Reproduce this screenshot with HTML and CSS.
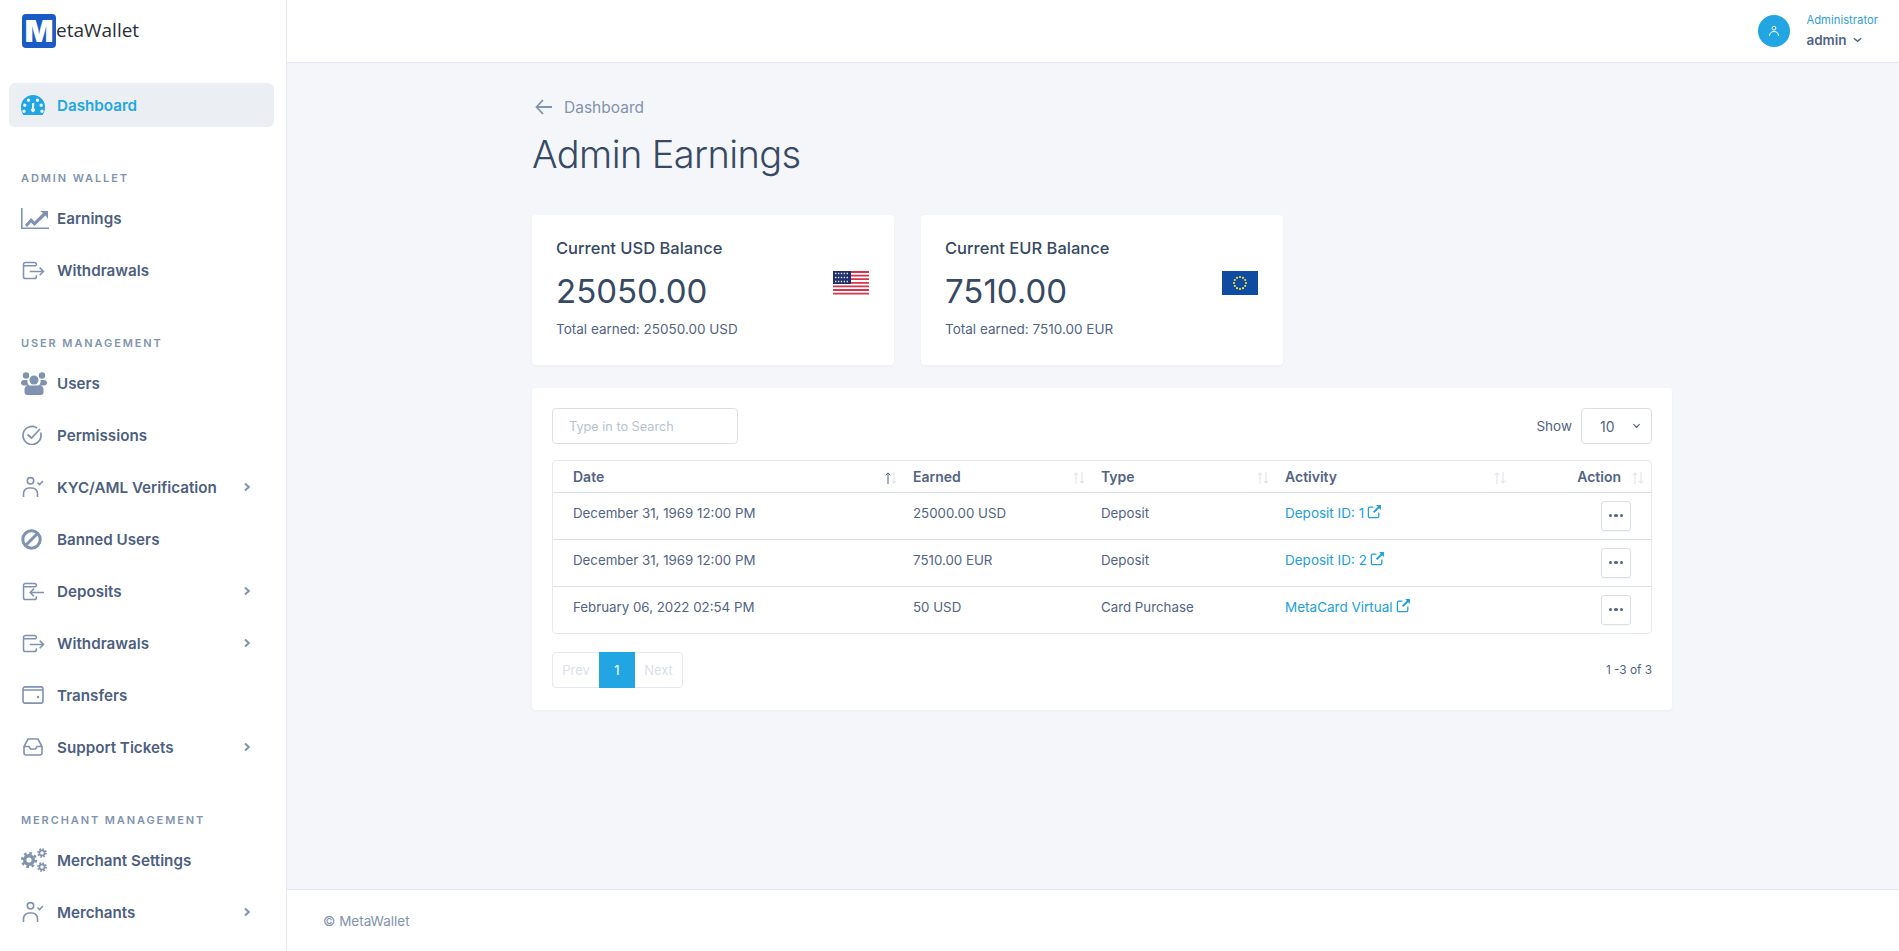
FILE: index.html
```html
<!DOCTYPE html>
<html lang="en">
<head>
<meta charset="utf-8">
<title>Admin Earnings</title>
<link rel="stylesheet" href="styles.css">
</head>
<body>
<svg class="defs" width="0" height="0" aria-hidden="true">
  <defs>
    <symbol id="i-chev" viewBox="0 0 10 10"><path d="M3 1.500 6.800 5 3 8.500" fill="none" stroke="currentColor" stroke-width="2"/></symbol>
    <symbol id="i-ext" viewBox="0 0 14 14"><path d="M11 8v3.500a1.200 1.200 0 0 1-1.200 1.200H2.500a1.200 1.200 0 0 1-1.200-1.200V4.200A1.200 1.200 0 0 1 2.500 3H6" fill="none" stroke="currentColor" stroke-width="1.200"/><path d="M8.500 1h4.500v4.500l-1.600-1.600-4.600 4.600-1.300-1.300 4.600-4.600z" fill="currentColor"/></symbol>
    <symbol id="i-sort" viewBox="0 0 12 14"><path class="up" d="M3 13V2M.8 4.200 3 1.800l2.200 2.400" fill="none" stroke="currentColor" stroke-width="1"/><path d="M9 1v11M6.800 9.800 9 12.200l2.200-2.400" fill="none" stroke="#dbdfea" stroke-width="1"/></symbol>
    <symbol id="i-out" viewBox="0 0 24 20"><path d="M15 5V3.500A2 2 0 0 0 13 1.500H3.500A2 2 0 0 0 1.500 3.500v13a2 2 0 0 0 2 2H13a2 2 0 0 0 2-2V15M1.500 5h13M8 11h14.500M18.500 7l4 4-4 4" fill="none" stroke="currentColor" stroke-width="1.600"/></symbol>
    <symbol id="i-in" viewBox="0 0 24 20"><path d="M15 5V3.500A2 2 0 0 0 13 1.500H3.500A2 2 0 0 0 1.500 3.500v13a2 2 0 0 0 2 2H13a2 2 0 0 0 2-2V15M1.500 5h13M23 11H8.500M12.500 7l-4 4 4 4" fill="none" stroke="currentColor" stroke-width="1.600"/></symbol>
    <symbol id="i-kyc" viewBox="0 0 22 22"><circle cx="8.500" cy="4.800" r="3.200" fill="none" stroke="currentColor" stroke-width="1.600"/><path d="M1.500 21v-3.500A5.500 5.500 0 0 1 7 12h3a5.500 5.500 0 0 1 5.500 5.500V21M15.500 6.500l2 2 3.500-3.500" fill="none" stroke="currentColor" stroke-width="1.600"/></symbol>
  </defs>
</svg>

<aside class="sidebar">
  <div class="brand"><span class="logo-mark">M</span><span class="logo-text">etaWallet</span></div>
  <nav class="nav">
    <a class="item active">
      <span class="ico"><svg class="s-dash" viewBox="0 0 24 20"><path fill-rule="evenodd" d="M12 0A12 12 0 0 0 0 12c0 3 .8 5.600 2.400 8h19.200c1.600-2.400 2.400-5 2.400-8A12 12 0 0 0 12 0zM7.500 3.500a1.700 1.700 0 1 1 0 3.400 1.700 1.700 0 0 1 0-3.400zm9 0a1.700 1.700 0 1 1 0 3.400 1.700 1.700 0 0 1 0-3.400zM3.800 8.500a1.700 1.700 0 1 1 0 3.400 1.700 1.700 0 0 1 0-3.400zm16.400 0a1.700 1.700 0 1 1 0 3.400 1.700 1.700 0 0 1 0-3.400zM13.300 8l-.3 5.200a2 2 0 1 1-2 0L11 8zM3 14.500a1.700 1.700 0 1 1 0 3.400 1.700 1.700 0 0 1 0-3.400zm18 0a1.700 1.700 0 1 1 0 3.400 1.700 1.700 0 0 1 0-3.400z" fill="currentColor"/></svg></span>
      <span>Dashboard</span>
    </a>

    <h6 class="heading">ADMIN WALLET</h6>
    <a class="item">
      <span class="ico"><svg class="s-earn" viewBox="0 0 28 21"><path d="M.8 0v20.200H28" fill="none" stroke="currentColor" stroke-width="1.600"/><path d="M4 17l6-7 3.500 3.500L22 5l-3-2h8v8l-2.500-3.500-11 10.500L10 14.500l-4 4.500z" fill="currentColor"/></svg></span>
      <span>Earnings</span>
    </a>
    <a class="item">
      <span class="ico"><svg class="s-io"><use href="#i-out"/></svg></span>
      <span>Withdrawals</span>
    </a>

    <h6 class="heading">USER MANAGEMENT</h6>
    <a class="item">
      <span class="ico"><svg class="s-users" viewBox="0 0 26 24"><circle cx="5" cy="4.500" r="3.200" fill="currentColor"/><circle cx="21" cy="4.500" r="3.200" fill="currentColor"/><circle cx="13" cy="9" r="4.500" fill="currentColor"/><path d="M0 12.500a3 3 0 0 1 3-3.500h3.500c-.5 3 1 5 2 5.500H3a3 3 0 0 1-3-2zM26 12.500a3 3 0 0 0-3-3.500h-3.500c.5 3-1 5-2 5.500H23a3 3 0 0 0 3-2zM3.500 19a4 4 0 0 1 4-4.500h11a4 4 0 0 1 4 4.500v2a3 3 0 0 1-3 3h-13a3 3 0 0 1-3-3z" fill="currentColor"/></svg></span>
      <span>Users</span>
    </a>
    <a class="item">
      <span class="ico"><svg class="s-perm" viewBox="0 0 22 20"><path d="M18.500 7.500A9 9 0 1 1 15 3" fill="none" stroke="currentColor" stroke-width="1.700"/><path d="M5.500 9.500l4 3.500 8.500-9" fill="none" stroke="currentColor" stroke-width="1.700"/></svg></span>
      <span>Permissions</span>
    </a>
    <a class="item">
      <span class="ico"><svg class="s-kyc"><use href="#i-kyc"/></svg></span>
      <span>KYC/AML Verification</span>
      <svg class="chev"><use href="#i-chev"/></svg>
    </a>
    <a class="item">
      <span class="ico"><svg class="s-ban" viewBox="0 0 21 21"><circle cx="10.500" cy="10.500" r="8.700" fill="none" stroke="currentColor" stroke-width="3"/><path d="M4.500 16.500l12-12" stroke="currentColor" stroke-width="3"/></svg></span>
      <span>Banned Users</span>
    </a>
    <a class="item">
      <span class="ico"><svg class="s-io"><use href="#i-in"/></svg></span>
      <span>Deposits</span>
      <svg class="chev"><use href="#i-chev"/></svg>
    </a>
    <a class="item">
      <span class="ico"><svg class="s-io"><use href="#i-out"/></svg></span>
      <span>Withdrawals</span>
      <svg class="chev"><use href="#i-chev"/></svg>
    </a>
    <a class="item">
      <span class="ico"><svg class="s-wallet" viewBox="0 0 22 18"><path d="M3 .9h16a2 2 0 0 1 2 2v12.200a2 2 0 0 1-2 2H3a2 2 0 0 1-2-2V2.900a2 2 0 0 1 2-2zM1 4h20" fill="none" stroke="currentColor" stroke-width="1.600"/><circle cx="16" cy="11" r="1.200" fill="currentColor"/></svg></span>
      <span>Transfers</span>
    </a>
    <a class="item">
      <span class="ico"><svg class="s-inbox" viewBox="0 0 20 18"><path d="M5 1h10l4 7.500V15a2 2 0 0 1-2 2H3a2 2 0 0 1-2-2V8.500zM1 8.500h5l1.500 2.500h5L14 8.500h5" fill="none" stroke="currentColor" stroke-width="1.600"/></svg></span>
      <span>Support Tickets</span>
      <svg class="chev"><use href="#i-chev"/></svg>
    </a>

    <h6 class="heading">MERCHANT MANAGEMENT</h6>
    <a class="item">
      <span class="ico"><svg class="s-gears" viewBox="0 0 26 24" fill="none" stroke="currentColor"><circle cx="8" cy="12" r="4.300" stroke-width="3.400"/><circle cx="8" cy="12" r="6.800" stroke-width="2.600" stroke-dasharray="2.670 2.670"/><circle cx="21" cy="5" r="2.600" stroke-width="1.700"/><circle cx="21" cy="5" r="4" stroke-width="1.700" stroke-dasharray="1.570 1.570"/><circle cx="21" cy="19" r="2.600" stroke-width="1.700"/><circle cx="21" cy="19" r="4" stroke-width="1.700" stroke-dasharray="1.570 1.570"/></svg></span>
      <span>Merchant Settings</span>
    </a>
    <a class="item">
      <span class="ico"><svg class="s-kyc"><use href="#i-kyc"/></svg></span>
      <span>Merchants</span>
      <svg class="chev"><use href="#i-chev"/></svg>
    </a>
  </nav>
</aside>

<div class="wrap">
  <header class="topbar">
    <div class="user">
      <span class="avatar"><svg viewBox="0 0 12 12"><circle cx="6" cy="3.200" r="1.900" fill="none" stroke="currentColor" stroke-width="1"/><path d="M1.500 11c0-3 1.800-4.500 4.500-4.500s4.500 1.500 4.500 4.500" fill="none" stroke="currentColor" stroke-width="1"/></svg></span>
      <div class="user-info">
        <div class="role">Administrator</div>
        <div class="uname">admin <svg class="uchev" viewBox="0 0 10 6"><path d="M1 1l4 3.500L9 1" fill="none" stroke="currentColor" stroke-width="1.500"/></svg></div>
      </div>
    </div>
  </header>

  <main class="content">
    <a class="back"><svg viewBox="0 0 18 16"><path d="M17 8H2M8 1 1.500 8 8 15" fill="none" stroke="currentColor" stroke-width="1.800"/></svg><span>Dashboard</span></a>
    <h1 class="title">Admin Earnings</h1>

    <section class="balances">
      <div class="card bal">
        <div>
          <div class="bal-title">Current USD Balance</div>
          <div class="bal-value">25050.00</div>
          <div class="bal-sub">Total earned: 25050.00 USD</div>
        </div>
        <svg class="flag" viewBox="0 0 36 24">
          <rect width="36" height="24" fill="#fff"/>
          <path d="M0 1h36M0 4.600h36M0 8.200h36M0 11.800h36M0 15.400h36M0 19h36M0 22.600h36" stroke="#d8344a" stroke-width="1.800"/>
          <rect width="18" height="13" fill="#1f2f6b"/>
          <path d="M2 2.500h14M2 6.500h14M2 10.500h14" stroke="#dfe6f5" stroke-width="1.400" stroke-dasharray="1.400 1.500"/>
        </svg>
      </div>
      <div class="card bal">
        <div>
          <div class="bal-title">Current EUR Balance</div>
          <div class="bal-value">7510.00</div>
          <div class="bal-sub">Total earned: 7510.00 EUR</div>
        </div>
        <svg class="flag" viewBox="0 0 36 24">
          <rect width="36" height="24" fill="#0f4ba0"/>
          <g fill="#f2e33a"><circle cx="18" cy="6" r="1.100"/><circle cx="21" cy="6.800" r="1.100"/><circle cx="23.200" cy="9" r="1.100"/><circle cx="24" cy="12" r="1.100"/><circle cx="23.200" cy="15" r="1.100"/><circle cx="21" cy="17.200" r="1.100"/><circle cx="18" cy="18" r="1.100"/><circle cx="15" cy="17.200" r="1.100"/><circle cx="12.800" cy="15" r="1.100"/><circle cx="12" cy="12" r="1.100"/><circle cx="12.800" cy="9" r="1.100"/><circle cx="15" cy="6.800" r="1.100"/></g>
        </svg>
      </div>
    </section>

    <section class="card panel">
      <div class="tools">
        <input class="search" type="text" placeholder="Type in to Search">
        <div class="show">
          <span>Show</span>
          <div class="select"><span>10</span><svg viewBox="0 0 10 6"><path d="M1.500 1 5 4.500 8.500 1" fill="none" stroke="currentColor" stroke-width="1.300"/></svg></div>
        </div>
      </div>

      <div class="table-box">
        <table>
          <colgroup><col class="c1"><col class="c2"><col class="c3"><col class="c4"><col class="c5"></colgroup>
          <thead>
            <tr>
              <th class="first"><div class="th"><span>Date</span><svg class="sort active-sort"><use href="#i-sort"/></svg></div></th>
              <th><div class="th"><span>Earned</span><svg class="sort"><use href="#i-sort"/></svg></div></th>
              <th><div class="th"><span>Type</span><svg class="sort"><use href="#i-sort"/></svg></div></th>
              <th><div class="th"><span>Activity</span><svg class="sort"><use href="#i-sort"/></svg></div></th>
              <th class="act"><div class="th end"><span>Action</span><svg class="sort"><use href="#i-sort"/></svg></div></th>
            </tr>
          </thead>
          <tbody>
            <tr>
              <td class="first">December 31, 1969 12:00 PM</td><td>25000.00 USD</td><td>Deposit</td>
              <td><a class="link">Deposit ID: 1<svg><use href="#i-ext"/></svg></a></td>
              <td class="act"><button class="more" type="button"><i></i><i></i><i></i></button></td>
            </tr>
            <tr>
              <td class="first">December 31, 1969 12:00 PM</td><td>7510.00 EUR</td><td>Deposit</td>
              <td><a class="link">Deposit ID: 2<svg><use href="#i-ext"/></svg></a></td>
              <td class="act"><button class="more" type="button"><i></i><i></i><i></i></button></td>
            </tr>
            <tr>
              <td class="first">February 06, 2022 02:54 PM</td><td>50 USD</td><td>Card Purchase</td>
              <td><a class="link">MetaCard Virtual<svg><use href="#i-ext"/></svg></a></td>
              <td class="act"><button class="more" type="button"><i></i><i></i><i></i></button></td>
            </tr>
          </tbody>
        </table>
      </div>

      <div class="pager-row">
        <div class="pager"><span class="pg prev">Prev</span><span class="pg cur">1</span><span class="pg next">Next</span></div>
        <div class="range">1 -3 of 3</div>
      </div>
    </section>
  </main>

  <footer class="footer">© MetaWallet</footer>
</div>
</body>
</html>
```

FILE: styles.css
```css
* { box-sizing: border-box; }
html, body { height: 100%; }
body {
  margin: 0;
  display: flex;
  height: 951px;
  overflow: hidden;
  background: #f5f6fa;
  color: #526484;
  font-family: Inter, "Noto Sans", sans-serif;
  font-size: 13.3px;
}
.defs { position: absolute; }
h1, h6 { margin: 0; }

/* sidebar */
.sidebar { flex: 0 0 287px; background: #fff; border-right: 1px solid #e5e9f2; overflow: hidden; }
.brand { height: 79px; padding: 14px 0 0 22px; display: flex; align-items: flex-start; }
.logo-mark { width: 34px; height: 34px; border-radius: 4px; background: #1b5bc6; color: #fff; font: 900 30px/34px Inter, sans-serif; text-align: center; }
.logo-text { font: 400 19px/32px "Open Sans", sans-serif; color: #2b2f36; }
.nav { display: flex; flex-direction: column; }
.item { flex: 0 0 44px; display: flex; align-items: center; margin: 4px 12px 4px 9px; padding: 0 22px 0 12px; font-size: 15.2px; font-weight: 600; color: #4d5f80; border-radius: 6px; }
.item.active { background: #ebeef2; color: #21a6e3; }
.item.active .ico { color: #21a6e3; }
.ico { flex: 0 0 36px; display: flex; align-items: center; color: #7f92b0; }
.chev { width: 10px; height: 10px; margin-left: auto; color: #8094ae; }
.heading { flex: 0 0 18px; margin: 38px 0 5px 21px; line-height: 18px; font-size: 11px; font-weight: 600; letter-spacing: 1.9px; color: #8094ae; }
.s-dash { width: 24px; height: 20px; }
.s-earn { width: 28px; height: 21px; }
.s-io { width: 23px; height: 19px; margin-left: 1px; }
.s-users { width: 26px; height: 24px; }
.s-perm { width: 22px; height: 20px; margin-left: 1px; }
.s-kyc { width: 22px; height: 22px; margin-left: 1px; }
.s-ban { width: 21px; height: 21px; }
.s-wallet { width: 22px; height: 18px; margin-left: 1px; }
.s-inbox { width: 20px; height: 18px; margin-left: 2px; }
.s-gears { width: 26px; height: 24px; }

/* main column */
.wrap { flex: 1; min-width: 0; display: flex; flex-direction: column; }
.topbar { flex: 0 0 63px; background: #fff; border-bottom: 1px solid #e5e9f2; display: flex; justify-content: flex-end; align-items: center; padding-right: 21px; }
.user { display: flex; align-items: center; gap: 16px; }
.avatar { width: 32px; height: 32px; border-radius: 50%; background: #21a6e3; color: #fff; display: flex; align-items: center; justify-content: center; }
.avatar svg { width: 12px; height: 12px; }
.role { font-size: 11.3px; line-height: 14px; color: #2fa0dc; }
.uname { margin-top: 4px; font-size: 13.5px; line-height: 18px; font-weight: 600; color: #526484; display: flex; align-items: center; gap: 6px; }
.uchev { width: 9px; height: 6px; }

.content { flex: 1; padding: 31px 227px 0 245px; }
.back { display: flex; align-items: center; gap: 11px; height: 26px; font-size: 15.5px; color: #8094ae; }
.back svg { width: 18px; height: 16px; margin-left: 3px; }
.title { margin-top: 9px; font-size: 38px; line-height: 50px; font-weight: 300; color: #364a63; letter-spacing: -.6px; }

.card { background: #fff; border-radius: 4px; box-shadow: 0 1px 3px rgba(54, 74, 99, .05); }
.balances { display: flex; gap: 27px; margin-top: 36px; }
.bal { width: 362px; height: 150px; padding: 21px 25px 21px 24px; display: flex; justify-content: space-between; }
.bal-title { font-size: 16.5px; line-height: 24px; font-weight: 500; color: #364a63; }
.bal-value { margin-top: 11px; font-size: 33px; line-height: 40px; font-weight: 400; color: #364a63; }
.bal-sub { margin-top: 8px; font-size: 13.5px; line-height: 20px; color: #526484; }
.flag { width: 36px; height: 24px; margin-top: 35px; }

.panel { margin-top: 23px; height: 322px; padding: 20px; }
.tools { display: flex; justify-content: space-between; }
.search { width: 186px; height: 36px; padding: 0 16px; border: 1px solid #dbdfea; border-radius: 4px; font: 400 12.7px Inter, sans-serif; outline: none; color: #526484; }
.search::placeholder { color: #b7c2d0; }
.show { display: flex; align-items: center; gap: 9px; font-size: 13.5px; }
.select { width: 71px; height: 36px; padding: 0 10px 0 18px; border: 1px solid #dbdfea; border-radius: 4px; display: flex; align-items: center; justify-content: space-between; font-size: 14px; }
.select svg { width: 9px; height: 6px; }

.table-box { margin-top: 16px; border: 1px solid #e5e9f2; border-radius: 4px; height: 174px; }
table { width: 100%; table-layout: fixed; border-collapse: collapse; }
.c1 { width: 348px; }
.c2 { width: 188px; }
.c3 { width: 184px; }
.c4 { width: 237px; }
th { height: 31px; padding: 0 4px 0 12px; font-size: 14px; font-weight: 600; text-align: left; color: #526484; }
.th { display: flex; justify-content: space-between; align-items: center; }
.th.end { justify-content: flex-end; gap: 11px; padding-right: 3px; }
.sort { width: 12px; height: 14px; margin-top: 3px; color: #dbdfea; }
.active-sort { color: #526484; }
td { height: 47px; padding: 10px 12px 0; vertical-align: top; line-height: 21px; border-top: 1px solid #dbdfea; font-size: 13.3px; color: #526484; }
.first { padding-left: 20px; }
.act { text-align: right; }
td.act { padding: 8px 20px 0 0; }
.link { color: #21a0dc; font-size: 13.5px; display: inline-flex; align-items: flex-start; gap: 3px; }
.link svg { width: 15px; height: 15px; margin-top: 1px; }
.more { width: 30px; height: 30px; padding: 0; background: #fff; border: 1px solid #dbdfea; border-radius: 3px; display: inline-flex; align-items: center; justify-content: center; gap: 2px; box-shadow: 0 1px 1px rgba(54, 74, 99, .05); }
.more i { width: 3.5px; height: 3.5px; border-radius: 50%; background: #526484; }

.pager-row { margin-top: 18px; display: flex; justify-content: space-between; align-items: center; }
.pager { display: flex; height: 36px; border: 1px solid #e5e9f2; border-radius: 4px; }
.pg { display: flex; align-items: center; justify-content: center; font-size: 13px; color: #dbdfea; }
.prev { width: 46px; }
.cur { width: 36px; margin: -1px 0; background: #21a6e3; color: #fff; }
.next { width: 47px; }
.range { font-size: 11.8px; color: #526484; }

.footer { flex: 0 0 62px; background: #fff; border-top: 1px solid #e5e9f2; padding: 0 0 0 36px; display: flex; align-items: center; font-size: 13.5px; color: #8094ae; }
```
